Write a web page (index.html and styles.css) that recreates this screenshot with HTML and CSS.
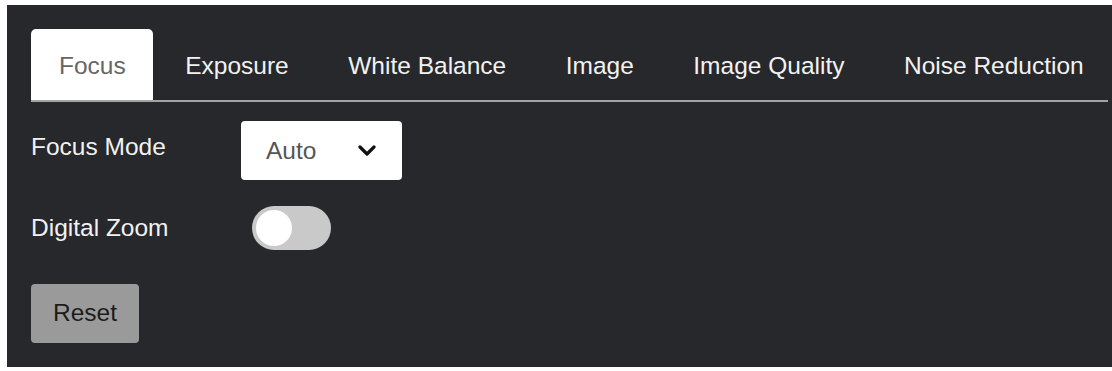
FILE: index.html
```html
<!DOCTYPE html>
<html lang="en">

    <head>
        <meta charset="UTF-8">
        <meta name="viewport" content="width=device-width, initial-scale=1.0">
        <title>Camera Settings</title>
        <link rel="stylesheet" href="styles.css">
    </head>

    <body>
        <div id="panel">
            <div class="tabs">
                <div class="tab active">Focus</div>
                <div class="tab">Exposure</div>
                <div class="tab">White Balance</div>
                <div class="tab">Image</div>
                <div class="tab">Image Quality</div>
                <div class="tab">Noise Reduction</div>
            </div>

            <div class="settings">
                <div class="row row-select">
                    <label>Focus Mode</label>
                    <div class="select">
                        <span>Auto</span>
                        <svg width="18" height="11" viewBox="0 0 18 11">
                            <path d="M2 2 L9 9 L16 2" fill="none" stroke="#111" stroke-width="3.2" stroke-linecap="round" stroke-linejoin="round"/>
                        </svg>
                    </div>
                </div>
                <div class="row row-toggle">
                    <label>Digital Zoom</label>
                    <div class="toggle">
                        <div class="knob"></div>
                    </div>
                </div>
                <button class="reset">Reset</button>
            </div>
        </div>
    </body>

</html>
```

FILE: styles.css
```css
html {
    height: 100%;
}

body {
    margin: 0px;
    padding: 5px 0px 4px 7px;
    height: 100%;
    box-sizing: border-box;
    background: #ffffff;
    font-family: "Liberation Sans", Arial, sans-serif;
    font-size: 24.5px;
    color: #f2f2f2;
}

body * {
    box-sizing: border-box;
}

#panel {
    height: 100%;
    padding: 24px 0px 0px 24px;
    background: #26282b;
}

.tabs {
    display: flex;
    gap: 4px;
    height: 73px;
    margin-right: 4px;
    border-bottom: 2px solid #a3a3a3;
}

.tab {
    display: flex;
    align-items: center;
    padding: 2px 27.5px 0px 28px;
    white-space: nowrap;
}

.tab.active {
    background: #ffffff;
    color: #666666;
    border-radius: 5px 5px 0px 0px;
}

.settings {
    padding-top: 19px;
}

.row {
    display: flex;
    align-items: center;
}

.row label {
    width: 210px;
}

.row-select label {
    padding-bottom: 7px;
}

.select {
    display: flex;
    align-items: center;
    justify-content: space-between;
    width: 161px;
    height: 59px;
    padding: 0px 26px 0px 25px;
    background: #ffffff;
    border-radius: 4px;
    color: #555555;
}

.row-toggle {
    margin-top: 26px;
}

.toggle {
    margin-left: 11px;
    width: 79px;
    height: 44px;
    padding: 4px;
    border-radius: 22px;
    background: #c9c9c9;
}

.knob {
    width: 36px;
    height: 36px;
    border-radius: 50%;
    background: #ffffff;
}

.reset {
    display: block;
    margin-top: 34px;
    width: 108px;
    height: 59px;
    padding: 0px 0px 2px 0px;
    border: none;
    border-radius: 4px;
    background: #9a9a9a;
    font: inherit;
    color: #1c1c1c;
}
```
